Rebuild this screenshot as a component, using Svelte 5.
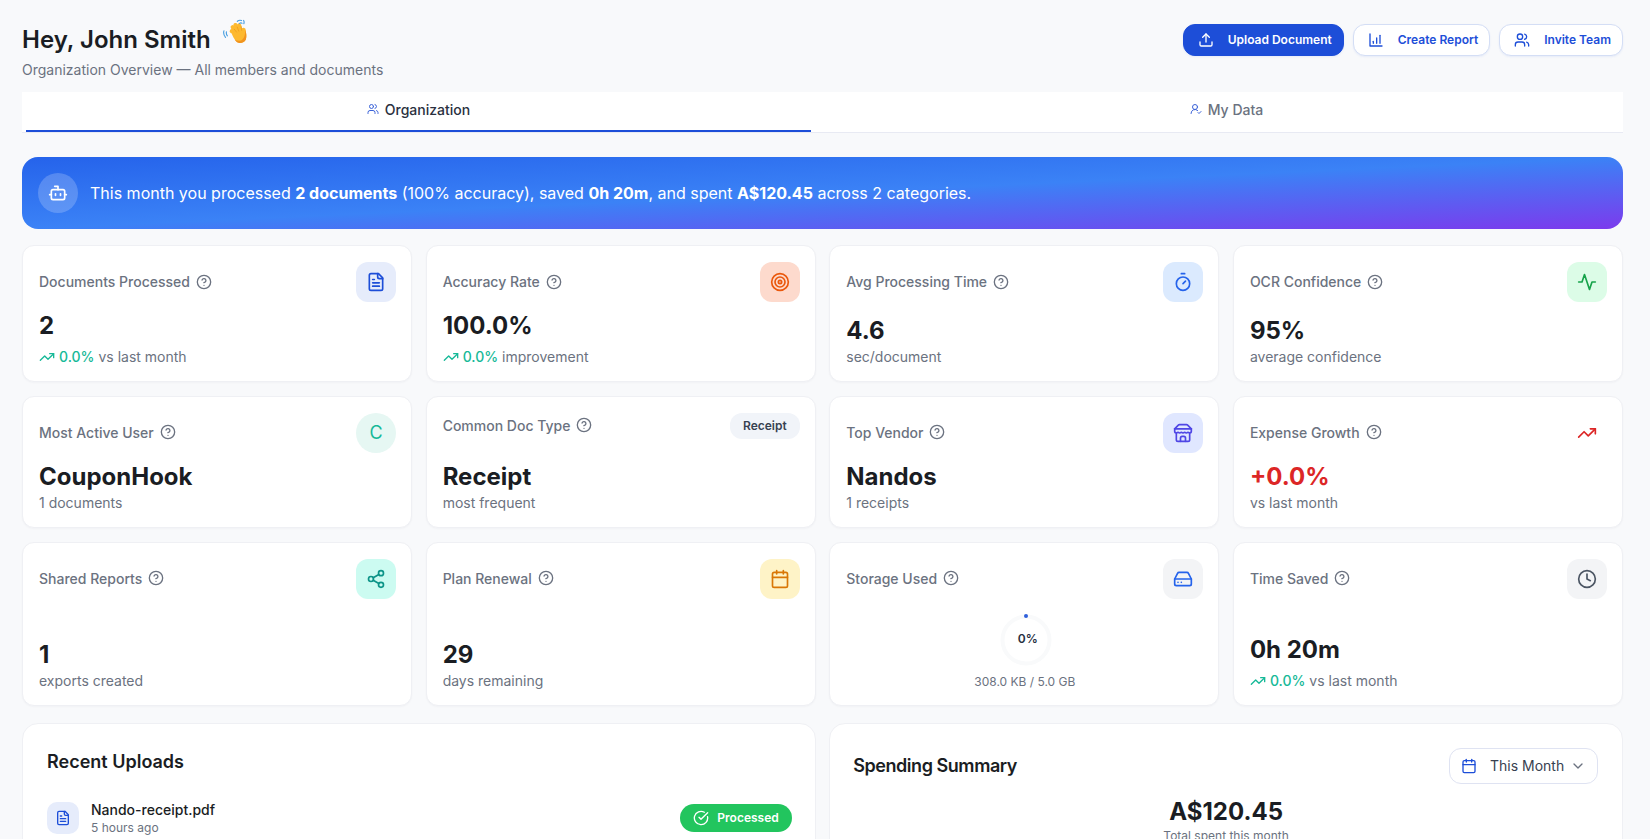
<script>
const icons = {
  file: '<path d="M15 2H6a2 2 0 0 0-2 2v16a2 2 0 0 0 2 2h12a2 2 0 0 0 2-2V7Z"/><path d="M14 2v4a2 2 0 0 0 2 2h4"/><path d="M10 9H8"/><path d="M16 13H8"/><path d="M16 17H8"/>',
  target: '<circle cx="12" cy="12" r="10"/><circle cx="12" cy="12" r="6"/><circle cx="12" cy="12" r="2"/>',
  timer: '<line x1="10" x2="14" y1="2" y2="2"/><line x1="12" x2="15" y1="14" y2="11"/><circle cx="12" cy="14" r="8"/>',
  activity: '<path d="M22 12h-4l-3 9L9 3l-3 9H2"/>',
  store: '<path d="m2 7 4.41-4.41A2 2 0 0 1 7.83 2h8.34a2 2 0 0 1 1.42.59L22 7"/><path d="M4 12v8a2 2 0 0 0 2 2h12a2 2 0 0 0 2-2v-8"/><path d="M15 22v-4a2 2 0 0 0-2-2h-2a2 2 0 0 0-2 2v4"/><path d="M2 7h20"/><path d="M22 7v3a2 2 0 0 1-2 2a2.7 2.7 0 0 1-1.59-.63.7.7 0 0 0-.82 0A2.7 2.7 0 0 1 16 12a2.7 2.7 0 0 1-1.59-.63.7.7 0 0 0-.82 0A2.7 2.7 0 0 1 12 12a2.7 2.7 0 0 1-1.59-.63.7.7 0 0 0-.82 0A2.7 2.7 0 0 1 8 12a2.7 2.7 0 0 1-1.59-.63.7.7 0 0 0-.82 0A2.7 2.7 0 0 1 4 12a2 2 0 0 1-2-2V7"/>',
  trend: '<polyline points="22 7 13.5 15.5 8.5 10.5 2 17"/><polyline points="16 7 22 7 22 13"/>',
  share: '<circle cx="18" cy="5" r="3"/><circle cx="6" cy="12" r="3"/><circle cx="18" cy="19" r="3"/><line x1="8.59" x2="15.42" y1="13.51" y2="17.49"/><line x1="15.41" x2="8.59" y1="6.51" y2="10.49"/>',
  calendar: '<path d="M8 2v4"/><path d="M16 2v4"/><rect width="18" height="18" x="3" y="4" rx="2"/><path d="M3 10h18"/>',
  drive: '<line x1="22" x2="2" y1="12" y2="12"/><path d="M5.45 5.11 2 12v6a2 2 0 0 0 2 2h16a2 2 0 0 0 2-2v-6l-3.45-6.89A2 2 0 0 0 16.76 4H7.24a2 2 0 0 0-1.79 1.11z"/><line x1="6" x2="6.01" y1="16" y2="16"/><line x1="10" x2="10.01" y1="16" y2="16"/>',
  clock: '<circle cx="12" cy="12" r="10"/><polyline points="12 6 12 12 16 14"/>',
  help: '<circle cx="12" cy="12" r="10"/><path d="M9.09 9a3 3 0 0 1 5.83 1c0 2-3 3-3 3"/><path d="M12 17h.01"/>',
  users: '<path d="M16 21v-2a4 4 0 0 0-4-4H6a4 4 0 0 0-4 4v2"/><circle cx="9" cy="7" r="4"/><path d="M22 21v-2a4 4 0 0 0-3-3.87"/><path d="M16 3.13a4 4 0 0 1 0 7.75"/>',
  usercheck: '<path d="M2 21a8 8 0 0 1 13.292-6"/><circle cx="10" cy="8" r="5"/><path d="m16 19 2 2 4-4"/>',
  upload: '<path d="M21 15v4a2 2 0 0 1-2 2H5a2 2 0 0 1-2-2v-4"/><polyline points="17 8 12 3 7 8"/><line x1="12" x2="12" y1="3" y2="15"/>',
  chart: '<path d="M3 3v18h18"/><path d="M13 17V9"/><path d="M18 17V5"/><path d="M8 17v-3"/>',
  bot: '<path d="M12 8V4H8"/><rect width="16" height="12" x="4" y="8" rx="2"/><path d="M2 14h2"/><path d="M20 14h2"/><path d="M15 13v2"/><path d="M9 13v2"/>',
  check: '<path d="M21.8 10A10 10 0 1 1 17 3.34"/><path d="m9 11 3 3L22 4"/>',
  chevron: '<path d="m6 9 6 6 6-6"/>'
};
const row1 = [
  { label: 'Documents Processed', icon: 'file', tone: 'blue', value: '2', trend: '0.0%', sub: 'vs last month' },
  { label: 'Accuracy Rate', icon: 'target', tone: 'orange', value: '100.0%', trend: '0.0%', sub: 'improvement' },
  { label: 'Avg Processing Time', icon: 'timer', tone: 'sky', value: '4.6', sub: 'sec/document' },
  { label: 'OCR Confidence', icon: 'activity', tone: 'green', value: '95%', sub: 'average confidence' }
];
const row2 = [
  { label: 'Most Active User', letter: 'C', value: 'CouponHook', sub: '1 documents' },
  { label: 'Common Doc Type', chip: 'Receipt', value: 'Receipt', sub: 'most frequent' },
  { label: 'Top Vendor', icon: 'store', tone: 'indigo', value: 'Nandos', sub: '1 receipts' },
  { label: 'Expense Growth', icon: 'trend', tone: 'red', value: '+0.0%', red: true, sub: 'vs last month' }
];
const row3 = [
  { label: 'Shared Reports', icon: 'share', tone: 'teal', value: '1', sub: 'exports created' },
  { label: 'Plan Renewal', icon: 'calendar', tone: 'amber', value: '29', sub: 'days remaining' },
  { label: 'Storage Used', icon: 'drive', tone: 'gray-blue', storage: true },
  { label: 'Time Saved', icon: 'clock', tone: 'gray', value: '0h 20m', trend: '0.0%', sub: 'vs last month' }
];
const rows = [{ cls: 'r1', cards: row1 }, { cls: 'r2', cards: row2 }, { cls: 'r3', cards: row3 }];
</script>

{#snippet ic(name, cls)}
  <svg class={cls} viewBox="0 0 24 24" fill="none" stroke="currentColor" stroke-width="2" stroke-linecap="round" stroke-linejoin="round">{@html icons[name]}</svg>
{/snippet}

<div class="page">
  <header class="head">
    <div>
      <h1>Hey, John Smith
        <svg class="wave" viewBox="0 0 24 24">
          <g fill="none" stroke="#fdb92f" stroke-width="4" stroke-linecap="round">
            <path d="M14 15 8.400 11.800"/>
            <path d="M14 14 9.300 7.800"/>
            <path d="M15 13 12 5.800"/>
            <path d="M17 12 15.500 6"/>
            <path d="M19.500 15 19.800 10.500"/>
          </g>
          <path d="M8.500 14.500 17 8.500l4.300 2c1.200 3 1.500 6 .7 9-1.200 3-4.300 4-7 3.400-2.700-.7-4.500-4-6.500-8.400Z" fill="#fdb92f"/>
          <path d="M21.300 10.500c1.200 3 1.500 6 .7 9-1.200 3-4.300 4-7 3.400-1.500-.4-2.700-1.500-3.800-3.200 2.500 1.500 5 1.600 7 .4 2.300-1.700 3.300-5.600 3.100-9.600Z" fill="#f1931f"/>
          <path d="M10.800 9.800 13 12.600M13.700 7.800l1.500 3.900M17.400 7.300l.5 3.600" fill="none" stroke="#e99a1e" stroke-width=".7" stroke-linecap="round"/>
          <path d="M13.800 2.200c1.200-1 2.800-1.200 4-.7M15.800 4.200c.8-.5 1.700-.6 2.500-.2M19.800 1.400c.5.900.6 2 .2 3.100M.9 11.400c-.6 1.900-.2 4.200 1.500 6.200M3.300 12.300c-.3 1.300 0 2.700.9 3.800" fill="none" stroke="#4a9fe0" stroke-width="1.100" stroke-linecap="round"/>
        </svg>
      </h1>
      <p class="subtitle">Organization Overview — All members and documents</p>
    </div>
    <div class="actions">
      <button class="btn primary">{@render ic('upload', 'bi')}<span>Upload Document</span></button>
      <button class="btn">{@render ic('chart', 'bi')}<span>Create Report</span></button>
      <button class="btn">{@render ic('users', 'bi')}<span>Invite Team</span></button>
    </div>
  </header>

  <nav class="tabs">
    <div class="tab active">{@render ic('users', 'ti')}Organization</div>
    <div class="tab">{@render ic('usercheck', 'ti')}My Data</div>
  </nav>

  <section class="banner">
    <span class="bot">{@render ic('bot', 'boti')}</span>
    <p>This month you processed <b>2 documents</b> (100% accuracy), saved <b>0h 20m</b>, and spent <b>A$120.45</b> across 2 categories.</p>
  </section>

  {#each rows as row}
    <div class="grid {row.cls}">
      {#each row.cards as c}
        <article class="card">
          <div class="top" class:chiptop={c.chip}>
            <span class="label">{c.label}{@render ic('help', 'help')}</span>
            {#if c.icon}
              <span class="badge {c.tone}">{@render ic(c.icon, 'bic')}</span>
            {:else if c.letter}
              <span class="badge round">{c.letter}</span>
            {:else if c.chip}
              <span class="chip">{c.chip}</span>
            {/if}
          </div>
          {#if c.storage}
            <div class="storage">
              <div class="ring">
                <svg viewBox="0 0 56 56"><circle cx="28" cy="28" r="23.500" fill="none" stroke="#f9fafb" stroke-width="4"/></svg>
                <i class="dot"></i>
                <span>0%</span>
              </div>
              <small>308.0 KB / 5.0 GB</small>
            </div>
          {:else}
            <div class="body">
              <div class="value" class:red={c.red} class:hastrend={c.trend}>{c.value}</div>
              <div class="sub">
                {#if c.trend}<span class="trend">{@render ic('trend', 'tr')}{c.trend}</span>{/if}
                {c.sub}
              </div>
            </div>
          {/if}
        </article>
      {/each}
    </div>
  {/each}

  <div class="panels">
    <section class="panel left">
      <h2>Recent Uploads</h2>
      <div class="upload">
        <span class="ficon">{@render ic('file', 'fi')}</span>
        <div class="fmeta">
          <div class="fname">Nando-receipt.pdf</div>
          <div class="ftime">5 hours ago</div>
        </div>
        <span class="status">{@render ic('check', 'si')}Processed</span>
      </div>
    </section>
    <section class="panel right">
      <div class="phead">
        <h2 class="tight">Spending Summary</h2>
        <div class="select">{@render ic('calendar', 'ci')}<span>This Month</span>{@render ic('chevron', 'chev')}</div>
      </div>
      <div class="total">A$120.45</div>
      <div class="totalsub">Total spent this month</div>
    </section>
  </div>
</div>

<style>
  :global(html), :global(body) { margin: 0; height: 839px; overflow: hidden; background: #f8f9fb; }
  :global(body) { font-family: Inter, "Liberation Sans", sans-serif; color: #1a1d23; }
  .page { height: 839px; overflow: hidden; box-sizing: border-box; padding: 0 27px 0 22px; }
  .head { display: flex; justify-content: space-between; height: 92px; box-sizing: border-box; padding-top: 25px; }
  h1 { margin: 0; font-size: 24px; line-height: 30px; font-weight: 600; display: flex; align-items: flex-start; gap: 12px; }
  .wave { width: 25px; height: 25px; margin-top: -6px; }
  .subtitle { margin: 6px 0 0; font-size: 14px; line-height: 18px; color: #6b7280; }
  .actions { display: flex; gap: 9px; margin-top: -1px; }
  .btn { height: 32px; display: flex; align-items: center; gap: 14px; padding: 0 11px 0 14px; border: 1px solid #d4def5; background: #fff; border-radius: 12px; color: #1d4ed8; font: 600 12px/1 Inter, sans-serif; box-shadow: 0 1px 2px rgba(29, 78, 216, .08); }
  .btn.primary { background: #1d4ed8; color: #fff; border-color: #1d4ed8; }
  .bi { width: 16px; height: 16px; }
  .tabs { display: grid; grid-template-columns: 785px 1fr; gap: 19px; padding-left: 4px; height: 41px; background: #fff; box-sizing: border-box; border-bottom: 1px solid #e8eaf3; }
  .tab { display: flex; align-items: center; justify-content: center; gap: 6px; height: 40px; padding-bottom: 4px; border-bottom: 2px solid transparent; font-size: 14px; font-weight: 500; color: #6b7280; box-sizing: border-box; }
  .tab.active { color: #2a3040; border-bottom-color: #1d4ed8; }
  .ti { width: 12px; height: 12px; color: #3a62d8; }
  .banner { margin-top: 24px; height: 72px; border-radius: 16px; background: linear-gradient(to bottom right, #2563eb, #3b82f6, #7c3aed); display: flex; align-items: center; padding: 0 16px; box-sizing: border-box; gap: 12px; color: #fff; }
  .banner p { margin: 0; font-size: 16px; }
  .banner b { font-weight: 700; }
  .bot { width: 40px; height: 40px; border-radius: 50%; background: rgba(255, 255, 255, .2); display: flex; align-items: center; justify-content: center; }
  .boti { width: 20px; height: 20px; }
  .grid { display: grid; grid-template-columns: repeat(4, 1fr); gap: 13.500px; margin-top: 13.500px; }
  .grid.r1 { margin-top: 16px; }
  .r1 .card { height: 137.400px; }
  .r2 .card { height: 132.400px; }
  .r3 .card { height: 164.500px; }
  .card { background: #fff; border: 1px solid #eff0f4; border-radius: 12px; box-sizing: border-box; padding: 16px 15px 14.500px 16px; display: flex; flex-direction: column; box-shadow: 0 1px 2px rgba(20, 30, 60, .03); }
  .top { display: flex; justify-content: space-between; align-items: center; }
  .chiptop { align-items: flex-start; }
  .chiptop .label { height: 26px; }
  .label { display: flex; align-items: center; gap: 6px; font-size: 14px; font-weight: 500; color: #6b7280; padding-bottom: 1px; box-sizing: border-box; }
  .help { width: 16px; height: 16px; }
  .badge { width: 40px; height: 40px; border-radius: 12px; display: flex; align-items: center; justify-content: center; flex: none; }
  .bic { width: 20px; height: 20px; }
  .blue { background: #e6ecfb; color: #1d4ed8; }
  .orange { background: #fddacd; color: #ea580c; }
  .sky { background: #dbeafe; color: #2563eb; }
  .green { background: #dcfce7; color: #16a34a; }
  .indigo { background: #e0e7ff; color: #4f46e5; }
  .red { color: #dc2626; }
  .teal { background: #ccfbf1; color: #0d9488; }
  .amber { background: #fef3c7; color: #d97706; }
  .gray-blue { background: #f3f4f6; color: #2563eb; }
  .gray { background: #f3f4f6; color: #4b5563; }
  .round { border-radius: 50%; background: #e6f7f3; color: #16b998; font-size: 18px; }
  .chip { background: #f1f4f9; border-radius: 12px; height: 26px; padding: 0 13px; display: flex; align-items: center; font-size: 12px; font-weight: 600; color: #374151; }
  .body { margin-top: auto; }
  .value { font-size: 24px; line-height: 32px; font-weight: 700; color: #1a1d23; }
  .value.red { color: #dc2626; }
  .value.hastrend { margin-bottom: 5px; }
  .sub { font-size: 14px; line-height: 20px; color: #6b7280; display: flex; gap: 4px; align-items: center; }
  .trend { color: #16b998; font-weight: 500; display: flex; align-items: center; gap: 4px; }
  .tr { width: 16px; height: 16px; }
  .storage { margin-top: 13px; display: flex; flex-direction: column; align-items: center; }
  .ring { position: relative; width: 56px; height: 56px; margin-left: 3px; }
  .ring svg { width: 56px; height: 56px; display: block; }
  .ring span { position: absolute; inset: 0; display: flex; align-items: center; justify-content: center; font-size: 12px; font-weight: 600; color: #27303f; padding-left: 3px; padding-bottom: 2px; box-sizing: border-box; }
  .dot { position: absolute; top: 2.700px; left: 26px; width: 4px; height: 4px; border-radius: 50%; background: #2f5fdb; }
  .storage small { font-size: 12px; line-height: 16px; color: #6b7280; margin-top: 6px; }
  .panels { display: grid; grid-template-columns: 1fr 1fr; gap: 13.500px; margin-top: 17px; }
  .panel { background: #fff; border: 1px solid #eff0f4; border-radius: 16px; box-sizing: border-box; height: 300px; }
  .left { padding: 23.500px 23px 24px 24px; }
  h2 { margin: 0; font-size: 18px; line-height: 28px; font-weight: 600; }
  h2.tight { letter-spacing: -.45px; }
  .upload { display: flex; align-items: center; margin-top: 24px; }
  .ficon { width: 32px; height: 32px; border-radius: 10px; background: #e6ecfb; color: #1d4ed8; display: flex; align-items: center; justify-content: center; }
  .fi { width: 16px; height: 16px; }
  .fmeta { margin-left: 12px; flex: 1; }
  .fname { font-size: 14px; line-height: 20px; font-weight: 500; }
  .ftime { font-size: 12px; line-height: 16px; color: #6b7280; }
  .status { height: 28px; padding: 0 13px; background: #22c55e; color: #fff; border-radius: 14px; display: flex; align-items: center; gap: 8px; font-size: 12px; font-weight: 600; box-sizing: border-box; }
  .si { width: 16px; height: 16px; }
  .right { padding: 24px 24px 24px 23px; }
  .phead { display: flex; justify-content: space-between; align-items: center; }
  .select { height: 36px; width: 149px; box-sizing: border-box; border: 1px solid #dfe3f2; border-radius: 12px; display: flex; align-items: center; padding: 0 11px; font-size: 14px; color: #374151; white-space: nowrap; }
  .select span { padding-bottom: 1px; }
  .ci { width: 16px; height: 16px; color: #1d4ed8; margin-right: 13px; flex: none; }
  .chev { width: 16px; height: 16px; color: #6b7280; margin-left: 6px; flex: none; }
  .total { text-align: center; font-size: 24px; line-height: 32px; font-weight: 700; margin-top: 11.500px; padding-left: 1px; }
  .totalsub { text-align: center; font-size: 12px; line-height: 16px; color: #6b7280; padding-left: 1px; }
</style>
